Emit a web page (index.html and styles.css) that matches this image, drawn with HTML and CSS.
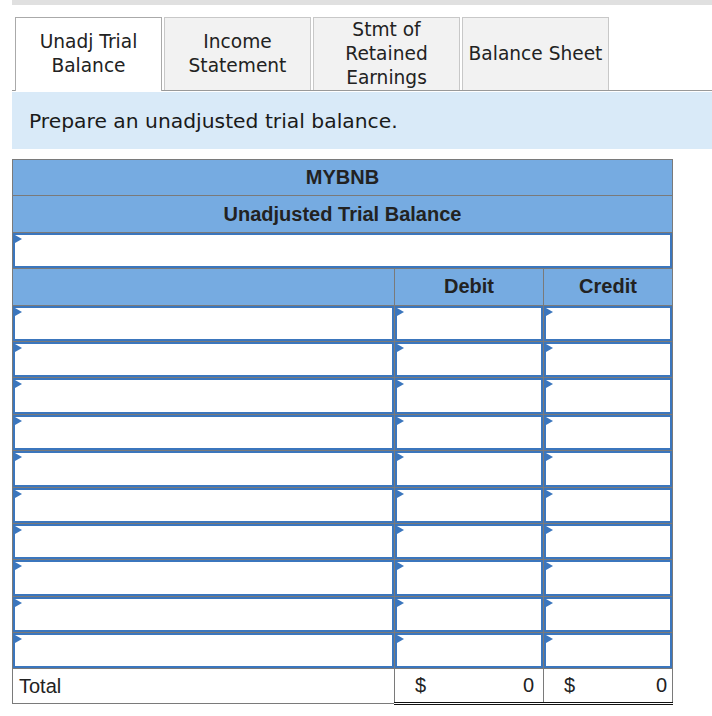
FILE: index.html
```html
<!DOCTYPE html>
<html lang="en">
<head>
	<meta charset="UTF-8">
	<meta name="viewport" content="width=device-width, initial-scale=1.0">
	<title>Unadjusted Trial Balance</title>
	<link rel="stylesheet" href="styles.css">
</head>
<body>
	<div class="topbar"></div>
	<div class="tabs">
		<div class="tab active">Unadj Trial<br>Balance</div>
		<div class="tab">Income<br>Statement</div>
		<div class="tab">Stmt of<br>Retained<br>Earnings</div>
		<div class="tab">Balance Sheet</div>
	</div>
	<div class="instructions">Prepare an unadjusted trial balance.</div>
	<table class="worksheet">
		<colgroup>
			<col class="col-account">
			<col class="col-debit">
			<col class="col-credit">
		</colgroup>
		<tr class="title"><th colspan="3">MYBNB</th></tr>
		<tr class="title"><th colspan="3">Unadjusted Trial Balance</th></tr>
		<tr><td colspan="3"><div class="field"></div></td></tr>
		<tr class="heads"><th></th><th>Debit</th><th>Credit</th></tr>
		<tr><td><div class="field"></div></td><td><div class="field"></div></td><td><div class="field"></div></td></tr>
		<tr><td><div class="field"></div></td><td><div class="field"></div></td><td><div class="field"></div></td></tr>
		<tr><td><div class="field"></div></td><td><div class="field"></div></td><td><div class="field"></div></td></tr>
		<tr><td><div class="field"></div></td><td><div class="field"></div></td><td><div class="field"></div></td></tr>
		<tr><td><div class="field"></div></td><td><div class="field"></div></td><td><div class="field"></div></td></tr>
		<tr><td><div class="field"></div></td><td><div class="field"></div></td><td><div class="field"></div></td></tr>
		<tr><td><div class="field"></div></td><td><div class="field"></div></td><td><div class="field"></div></td></tr>
		<tr><td><div class="field"></div></td><td><div class="field"></div></td><td><div class="field"></div></td></tr>
		<tr><td><div class="field"></div></td><td><div class="field"></div></td><td><div class="field"></div></td></tr>
		<tr><td><div class="field"></div></td><td><div class="field"></div></td><td><div class="field"></div></td></tr>
		<tr class="total">
			<td class="label">Total</td>
			<td class="amount debit"><span>$</span><span>0</span></td>
			<td class="amount credit"><span>$</span><span>0</span></td>
		</tr>
	</table>
</body>
</html>
```

FILE: styles.css
```css
body {
	margin: 0;
	background: #fff;
	color: #222;
	font-family: "DejaVu Sans", Verdana, sans-serif;
}
.topbar {
	margin-left: 12px;
	height: 5px;
	background-color: #e0e0e0;
}
.tabs {
	display: flex;
	gap: 2px;
	margin: 12px 0 0 12px;
	padding-left: 3px;
	border-bottom: 1px solid #999;
}
.tab {
	width: 147px;
	box-sizing: border-box;
	display: flex;
	align-items: center;
	justify-content: center;
	text-align: center;
	white-space: nowrap;
	font-size: 18.6px;
	line-height: 24px;
	background-color: #f2f2f2;
	border: 1px solid #c8c8c8;
	border-bottom: none;
}
.tab.active {
	background-color: #fff;
	border-color: #aaa;
	margin-bottom: -1px;
	padding-bottom: 1px;
}
.instructions {
	margin: 1px 0 0 12px;
	height: 57px;
	padding-left: 17px;
	display: flex;
	align-items: center;
	background-color: #d9eaf8;
	font-size: 20.3px;
	color: #1a1a1a;
}
.worksheet {
	margin: 10px 0 0 12px;
	width: 661px;
	border-collapse: collapse;
	table-layout: fixed;
	font-family: "Liberation Sans", Arial, sans-serif;
	font-size: 20px;
	color: #222;
}
.col-account {
	width: 382px;
}
.col-debit {
	width: 149px;
}
.worksheet th, .worksheet td {
	border: 1px solid #7a7a7a;
	padding: 0;
	height: 35.4px;
}
.worksheet th {
	background-color: #76abe1;
	font-weight: bold;
	text-align: center;
}
.field {
	position: relative;
	height: 35.4px;
	box-sizing: border-box;
	border: 2px solid #3b76bd;
	background: #fff;
}
.field::before {
	content: "";
	position: absolute;
	top: 0;
	left: 0;
	border-left: 7px solid #3b76bd;
	border-top: 4.5px solid transparent;
	border-bottom: 4.5px solid transparent;
}
.total .label {
	padding-left: 6px;
}
.total td {
	height: 33px;
}
.total .amount {
	border-bottom: 3px double #111;
}
.total .amount span:first-child {
	float: left;
}
.total .amount span:last-child {
	float: right;
}
.total .debit {
	padding: 0 9px 0 20px;
}
.total .credit {
	padding: 0 5px 0 20px;
}
```
